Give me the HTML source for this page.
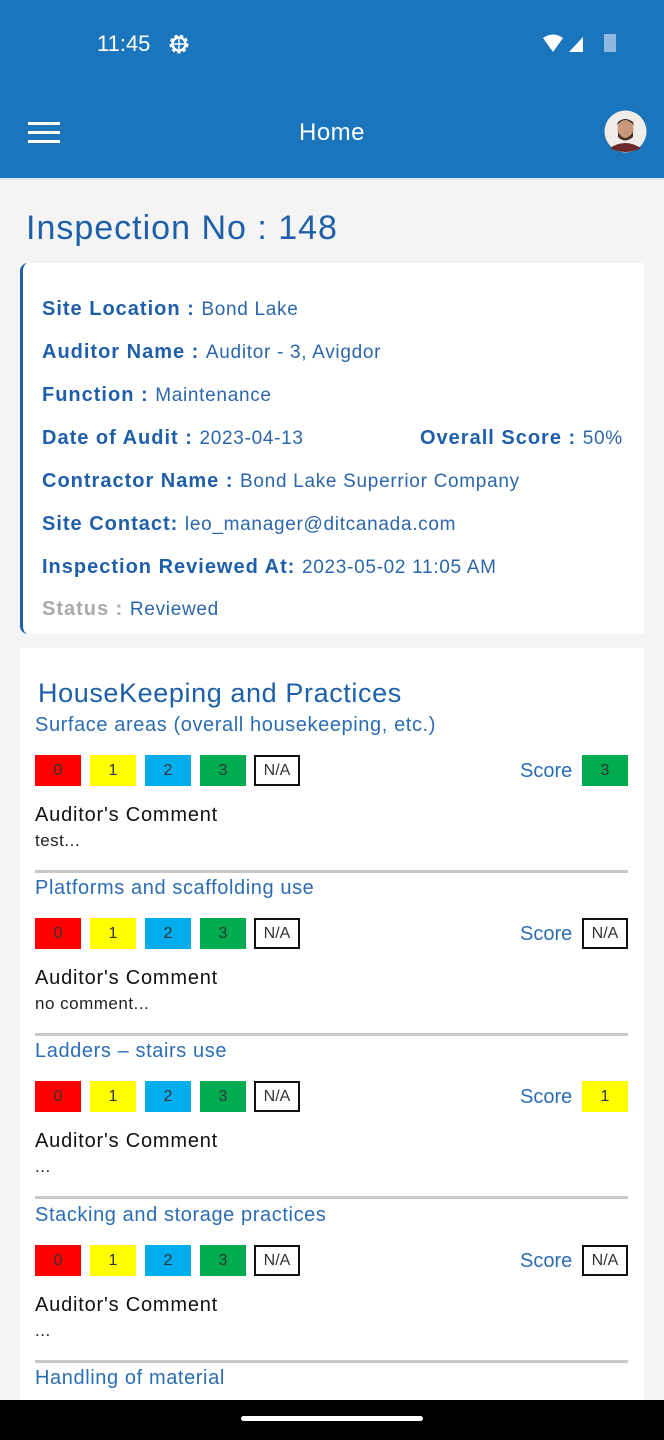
<!DOCTYPE html>
<html><head><meta charset="utf-8"><style>
*{margin:0;padding:0;box-sizing:border-box}
body{width:664px;height:1440px;background:#f4f4f4;font-family:"Liberation Sans",sans-serif;position:relative;overflow:hidden}
.a{position:absolute;white-space:nowrap}
.hdr{position:absolute;left:0;top:0;width:664px;height:178px;background:#1b75bc}
.card{position:absolute;left:20px;width:624px;background:#fff}
.lbl{font-weight:bold;color:#1f5faa;font-size:20px;letter-spacing:1px}
.val{color:#2c66aa;font-size:19px;letter-spacing:0.7px}
.row{position:absolute;left:42px;line-height:24px;white-space:nowrap}
.sub{position:absolute;left:35px;color:#2b6db4;font-size:20px;letter-spacing:0.6px;line-height:24px;white-space:nowrap}
.box{position:absolute;width:46px;height:31px;font-size:16px;text-align:center;line-height:31px;color:#333}
.cm{position:absolute;left:35px;font-size:20px;letter-spacing:0.8px;color:#111;line-height:24px}
.ct{position:absolute;left:35px;font-size:17px;letter-spacing:0.5px;color:#222;line-height:20px}
.div{position:absolute;left:35px;width:593px;height:3px;background:#c8c8c8}
.sc{position:absolute;left:520px;font-size:20px;color:#2b6db4;line-height:24px}
</style></head><body>
<div class="hdr"></div>
<div class="a" style="left:97px;top:31px;color:#fff;font-size:22px">11:45</div>
<svg class="a" style="left:167px;top:32px" width="24" height="24" viewBox="0 0 24 24"><circle cx="12" cy="12" r="8" fill="none" stroke="#fff" stroke-width="3" stroke-dasharray="3 2.5"/><circle cx="12" cy="12" r="6.5" fill="none" stroke="#fff" stroke-width="2.5"/><path d="M7 12h10M12 7v10" stroke="#fff" stroke-width="1.5"/></svg>
<svg class="a" style="left:541px;top:33px" width="80" height="20" viewBox="0 0 80 20"><path d="M2 5 Q12 -2 22 5 L12 19 Z" fill="#fff"/><path d="M28 19 L42 4 L42 19 Z" fill="#fff"/><rect x="63" y="1" width="12" height="18" fill="#8fb8e0"/></svg>
<div class="a" style="left:28px;top:122px;width:32px;height:3px;background:#fff"></div>
<div class="a" style="left:28px;top:131px;width:32px;height:3px;background:#fff"></div>
<div class="a" style="left:28px;top:140px;width:32px;height:3px;background:#fff"></div>
<div class="a" style="left:0;top:119px;width:664px;text-align:center;color:#fff;font-size:24px;letter-spacing:0.5px">Home</div>
<svg class="a" style="left:604px;top:110px" width="43" height="43" viewBox="0 0 43 43"><circle cx="21.5" cy="21.5" r="21" fill="#f0ece8"/><ellipse cx="21.5" cy="20" rx="8" ry="10" fill="#c9987a"/><path d="M13 16 Q21 4 30 16 L29 12 Q21 6 14 12Z" fill="#3a2a20"/><path d="M14 22 Q21 34 29 22 L29 27 Q21 34 14 27Z" fill="#4a3026"/><path d="M6 38 Q21 28 37 38 Q21 46 6 38Z" fill="#6a2a2a"/></svg>
<div class="a" style="left:0;top:178px;width:664px;height:2px;background:#dfe6ee"></div>
<div class="a" style="left:26px;top:209px;font-size:34px;letter-spacing:1px;color:#1d5fa8">Inspection No : 148</div>

<div class="card" style="top:263px;height:371px;border-left:3px solid #1f5faa;border-radius:8px 0 0 8px"></div>
<div class="row" style="top:297px"><span class="lbl">Site Location : </span> <span class="val">Bond Lake</span></div>
<div class="row" style="top:340px"><span class="lbl">Auditor Name : </span> <span class="val">Auditor - 3, Avigdor</span></div>
<div class="row" style="top:383px"><span class="lbl">Function : </span> <span class="val">Maintenance</span></div>
<div class="row" style="top:426px"><span class="lbl">Date of Audit : </span> <span class="val">2023-04-13</span></div>
<div class="row" style="top:426px;left:420px"><span class="lbl">Overall Score : </span> <span class="val">50%</span></div>
<div class="row" style="top:469px"><span class="lbl">Contractor Name : </span> <span class="val">Bond Lake Superrior Company</span></div>
<div class="row" style="top:512px"><span class="lbl">Site Contact: </span> <span class="val">leo_manager@ditcanada.com</span></div>
<div class="row" style="top:555px"><span class="lbl">Inspection Reviewed At: </span> <span class="val">2023-05-02 11:05 AM</span></div>
<div class="row" style="top:597px"><span class="lbl" style="color:#aaa">Status : </span> <span class="val">Reviewed</span></div>

<div class="card" style="top:648px;height:760px"></div>
<div class="a" style="left:38px;top:678px;font-size:27px;letter-spacing:0.6px;color:#1d5fa8">HouseKeeping and Practices</div>

<div class="sub" style="top:713px">Surface areas (overall housekeeping, etc.)</div>
<div class="box" style="left:35px;top:755px;background:#f00">0</div>
<div class="box" style="left:90px;top:755px;background:#ff0">1</div>
<div class="box" style="left:145px;top:755px;background:#00adef">2</div>
<div class="box" style="left:200px;top:755px;background:#00ac4f">3</div>
<div class="box" style="left:254px;top:755px;border:2px solid #111;line-height:27px">N/A</div>
<div class="sc" style="top:759px">Score</div>
<div class="box" style="left:582px;top:755px;background:#00ac4f">3</div>
<div class="cm" style="top:803px">Auditor's Comment</div>
<div class="ct" style="top:831px">test...</div>
<div class="div" style="top:870px"></div>

<div class="sub" style="top:876px">Platforms and scaffolding use</div>
<div class="box" style="left:35px;top:918px;background:#f00">0</div>
<div class="box" style="left:90px;top:918px;background:#ff0">1</div>
<div class="box" style="left:145px;top:918px;background:#00adef">2</div>
<div class="box" style="left:200px;top:918px;background:#00ac4f">3</div>
<div class="box" style="left:254px;top:918px;border:2px solid #111;line-height:27px">N/A</div>
<div class="sc" style="top:922px">Score</div>
<div class="box" style="left:582px;top:918px;border:2px solid #111;line-height:27px">N/A</div>
<div class="cm" style="top:966px">Auditor's Comment</div>
<div class="ct" style="top:994px">no comment...</div>
<div class="div" style="top:1033px"></div>

<div class="sub" style="top:1039px">Ladders – stairs use</div>
<div class="box" style="left:35px;top:1081px;background:#f00">0</div>
<div class="box" style="left:90px;top:1081px;background:#ff0">1</div>
<div class="box" style="left:145px;top:1081px;background:#00adef">2</div>
<div class="box" style="left:200px;top:1081px;background:#00ac4f">3</div>
<div class="box" style="left:254px;top:1081px;border:2px solid #111;line-height:27px">N/A</div>
<div class="sc" style="top:1085px">Score</div>
<div class="box" style="left:582px;top:1081px;background:#ff0">1</div>
<div class="cm" style="top:1129px">Auditor's Comment</div>
<div class="ct" style="top:1157px">...</div>
<div class="div" style="top:1196px"></div>

<div class="sub" style="top:1203px">Stacking and storage practices</div>
<div class="box" style="left:35px;top:1245px;background:#f00">0</div>
<div class="box" style="left:90px;top:1245px;background:#ff0">1</div>
<div class="box" style="left:145px;top:1245px;background:#00adef">2</div>
<div class="box" style="left:200px;top:1245px;background:#00ac4f">3</div>
<div class="box" style="left:254px;top:1245px;border:2px solid #111;line-height:27px">N/A</div>
<div class="sc" style="top:1249px">Score</div>
<div class="box" style="left:582px;top:1245px;border:2px solid #111;line-height:27px">N/A</div>
<div class="cm" style="top:1293px">Auditor's Comment</div>
<div class="ct" style="top:1321px">...</div>
<div class="div" style="top:1360px"></div>

<div class="sub" style="top:1366px">Handling of material</div>

<div class="a" style="left:0;top:1400px;width:664px;height:40px;background:#000"></div>
<div class="a" style="left:241px;top:1416px;width:182px;height:5px;border-radius:3px;background:#fff"></div>
</body></html>
